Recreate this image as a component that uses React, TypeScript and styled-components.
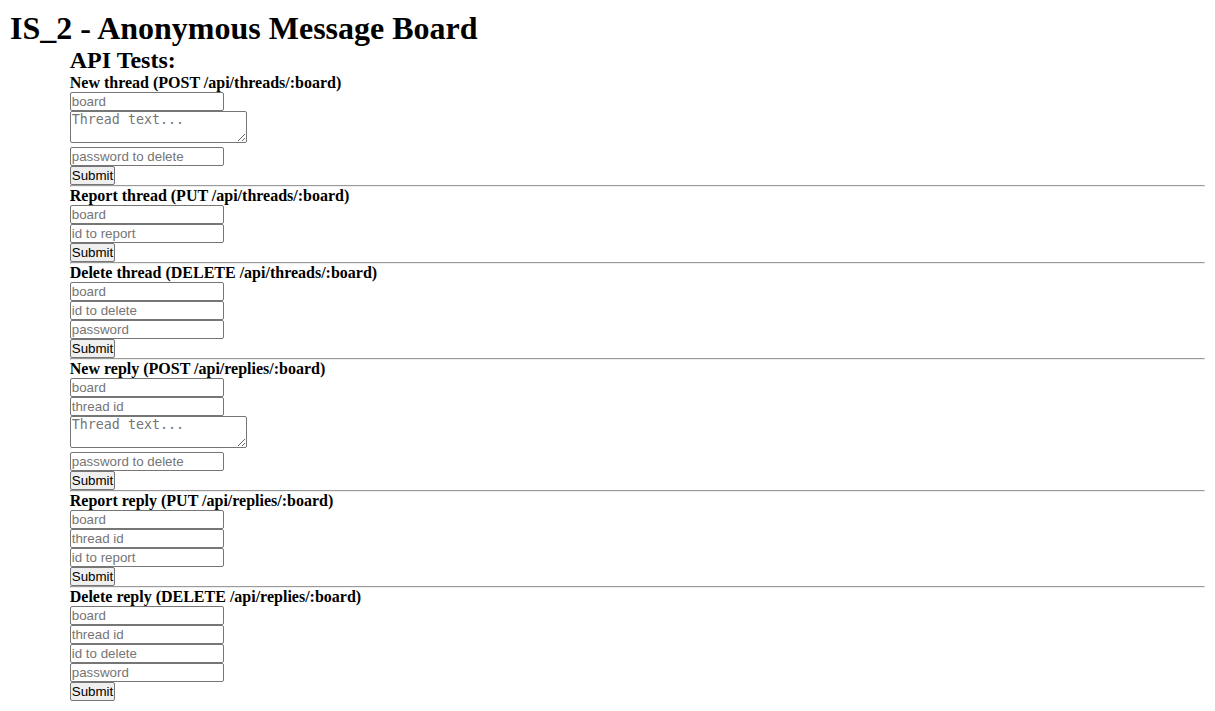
import React from "react";
import styled, { createGlobalStyle } from "styled-components";

const GlobalStyle = createGlobalStyle`
  html, body { background: #ffffff; }
  body {
    margin: 10px;
    font-family: "Liberation Serif", "Times New Roman", serif;
    color: #000000;
  }
`;

const Title = styled.h1`
  margin: 0;
  font-size: 32px;
  font-weight: bold;
`;

const TestUI = styled.div`
  margin-left: 5%;
`;

const SubTitle = styled.h2`
  margin: 0;
  font-size: 24px;
  font-weight: bold;
  text-align: left;
`;

const SectionTitle = styled.h4`
  margin: 0;
  font-size: 16px;
  font-weight: bold;
`;

const Form = styled.form`
  margin: 0;
  display: flex;
  flex-direction: column;
  align-items: flex-start;
`;

const TextInput = styled.input`
  box-sizing: border-box;
  width: 154px;
  height: 19px;
  margin: 0;
  padding: 1px;
  border: 1px solid #767676;
  border-radius: 2px;
  background: #ffffff;
  font-family: "Liberation Sans", Arial, sans-serif;
  font-size: 13.333px;
  color: #000000;
  &::placeholder { color: #757575; }
`;

const TextArea = styled.textarea`
  box-sizing: border-box;
  width: 177px;
  height: 32px;
  margin: 0 0 4px 0;
  padding: 0 1px;
  border: 1px solid #767676;
  border-radius: 2px;
  background: #ffffff;
  font-family: "DejaVu Sans Mono", monospace;
  font-size: 13.333px;
  line-height: 15px;
  color: #000000;
  &::placeholder { color: #757575; }
`;

const SubmitButton = styled.button`
  box-sizing: border-box;
  height: 19px;
  margin: 0;
  padding: 1px 1px;
  border: 1px solid #767676;
  border-radius: 2px;
  background: #efefef;
  font-family: "Liberation Sans", Arial, sans-serif;
  font-size: 13.333px;
  line-height: 15px;
  color: #000000;
`;

const Divider = styled.hr`
  margin: 0;
  border-style: inset;
  border-width: 1px;
  color: gray;
`;

type Field = { kind: "input" | "textarea"; placeholder: string };

type Section = { title: string; fields: Field[] };

const inp = (placeholder: string): Field => ({ kind: "input", placeholder });
const area = (placeholder: string): Field => ({ kind: "textarea", placeholder });

const sections: Section[] = [
  {
    title: "New thread (POST /api/threads/:board)",
    fields: [inp("board"), area("Thread text..."), inp("password to delete")],
  },
  {
    title: "Report thread (PUT /api/threads/:board)",
    fields: [inp("board"), inp("id to report")],
  },
  {
    title: "Delete thread (DELETE /api/threads/:board)",
    fields: [inp("board"), inp("id to delete"), inp("password")],
  },
  {
    title: "New reply (POST /api/replies/:board)",
    fields: [inp("board"), inp("thread id"), area("Thread text..."), inp("password to delete")],
  },
  {
    title: "Report reply (PUT /api/replies/:board)",
    fields: [inp("board"), inp("thread id"), inp("id to report")],
  },
  {
    title: "Delete reply (DELETE /api/replies/:board)",
    fields: [inp("board"), inp("thread id"), inp("id to delete"), inp("password")],
  },
];

export default function App() {
  return (
    <>
      <GlobalStyle />
      <header>
        <Title>IS_2 - Anonymous Message Board</Title>
      </header>
      <TestUI>
        <SubTitle>API Tests:</SubTitle>
        {sections.map((s, i) => (
          <React.Fragment key={i}>
            <SectionTitle>{s.title}</SectionTitle>
            <Form onSubmit={(e) => e.preventDefault()}>
              {s.fields.map((f, j) =>
                f.kind === "input" ? (
                  <TextInput key={j} type="text" placeholder={f.placeholder} />
                ) : (
                  <TextArea key={j} placeholder={f.placeholder} />
                )
              )}
              <SubmitButton type="submit">Submit</SubmitButton>
            </Form>
            {i < sections.length - 1 && <Divider />}
          </React.Fragment>
        ))}
      </TestUI>
    </>
  );
}
